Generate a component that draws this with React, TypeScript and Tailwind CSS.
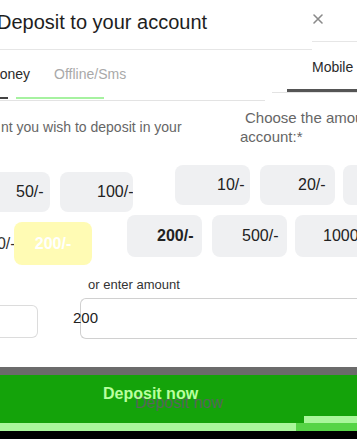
import React from "react";

function Btn({ w, h, text, pl, bold, cls }: { w: string; h: string; text: string; pl: string; bold?: boolean; cls?: string }) {
  return (
    <div className={`flex shrink-0 items-center overflow-hidden whitespace-nowrap rounded-lg bg-[#eff0f2] text-[16px] text-[#222] ${w} ${h} ${pl} ${bold ? "font-bold" : ""} ${cls ?? ""}`}>
      {text}
    </div>
  );
}

export default function App() {
  return (
    <div className="w-[357px] h-[439px] overflow-hidden bg-white flex flex-col" style={{ fontFamily: '"Liberation Sans", Arial, sans-serif' }}>
      {/* Header */}
      <div className="flex items-start shrink-0">
        <div className="w-[312px] h-[50px] border-b border-[#e6e6e6] flex items-start justify-between shrink-0">
          <div className="ml-[-3px] mt-[8px] text-[20px] leading-[28px] text-[#1e1e1e] whitespace-nowrap">Deposit to your account</div>
          <div className="mt-[11px] mr-[-14px] text-[#8a8a8a]">
            <svg width="16" height="16" viewBox="0 0 16 16" fill="none" stroke="currentColor" strokeWidth="1.6" strokeLinecap="round">
              <path d="M4 4 L12 12 M12 4 L4 12" />
            </svg>
          </div>
        </div>
        <div className="flex-1 h-[42px] border-b border-[#e6e6e6]" />
      </div>

      {/* Tabs */}
      <div className="flex items-start shrink-0">
        <div className="w-[265px] h-[51px] border-b border-[#e3e3e3] flex flex-col shrink-0">
          <div className="h-[47px] flex items-center gap-[24px] pt-[2px] text-[14px] whitespace-nowrap">
            <span className="ml-[-12px] text-[#2a2a2a]">money</span>
            <span className="text-[#a9a9a9]">Offline/Sms</span>
          </div>
          <div className="h-[2px] flex">
            <div className="w-[8px] bg-[#444]" />
            <div className="ml-[8px] w-[88px] bg-[#a6f2a0]" />
          </div>
        </div>
        <div className="ml-[7px] mt-[-8px] flex-1 h-[51px] border-b border-[#e3e3e3] flex flex-col">
          <div className="h-[47px] flex items-center pl-[40px] pt-[4px] text-[14px] text-[#2a2a2a] whitespace-nowrap">Mobile</div>
          <div className="h-[3px] ml-[15px] bg-[#555]" />
        </div>
      </div>

      {/* Description */}
      <div className="flex items-start shrink-0 h-[64px] text-[#666] whitespace-nowrap">
        <div className="w-[240px] pt-[16px] shrink-0 overflow-hidden text-[14px]">
          <span className="ml-[1px]">nt you wish to deposit in your</span>
        </div>
        <div className="flex flex-col leading-[19px] pt-[7px] text-[15px]">
          <span className="ml-[5px]">Choose the amount</span>
          <span>account:*</span>
        </div>
      </div>

      {/* Amount row 1 */}
      <div className="flex items-start shrink-0 h-[50px]">
        <Btn w="w-[50px]" h="h-[40px]" text="50/-" pl="pl-[16px]" cls="mt-[7px] rounded-l-none" />
        <Btn w="w-[73px]" h="h-[40px]" text="100/-" pl="pl-[37px]" cls="mt-[7px] ml-[10px]" />
        <Btn w="w-[75px]" h="h-[40px]" text="10/-" pl="pl-[42px]" cls="ml-[42px]" />
        <Btn w="w-[75px]" h="h-[40px]" text="20/-" pl="pl-[38px]" cls="ml-[10px]" />
        <Btn w="w-[75px]" h="h-[40px]" text="" pl="" cls="ml-[8px]" />
      </div>

      {/* Amount row 2 */}
      <div className="flex items-start shrink-0 h-[58px]">
        <div className="w-[14px] h-[43px] mt-[7px] flex items-center text-[16px] text-[#333] shrink-0 overflow-hidden whitespace-nowrap">
          <span className="ml-[-12px]">00/-</span>
        </div>
        <div className="w-[78px] h-[43px] mt-[7px] rounded-lg bg-[#fffbb4] flex items-center justify-center text-[16px] font-bold text-white shrink-0">200/-</div>
        <Btn w="w-[75px]" h="h-[42px]" text="200/-" pl="pl-[30px]" bold cls="ml-[35px]" />
        <Btn w="w-[75px]" h="h-[42px]" text="500/-" pl="pl-[30px]" cls="ml-[10px]" />
        <Btn w="w-[75px]" h="h-[42px]" text="1000/-" pl="pl-[28px]" cls="ml-[8px]" />
      </div>

      {/* Label */}
      <div className="shrink-0 h-[25px] pl-[88px] pt-[4px] text-[13px] leading-[16px] text-[#333] whitespace-nowrap">or enter amount</div>

      {/* Inputs */}
      <div className="flex items-start shrink-0 h-[69px]">
        <div className="w-[38px] h-[33px] mt-[7px] border border-l-0 border-[#dcdcdc] rounded-r-md shrink-0" />
        <div className="ml-[42px] flex-1 h-[41px] border border-r-0 border-[#d0d0d0] rounded-l-md flex items-center">
          <span className="ml-[-8px] text-[15px] text-[#222]">200</span>
        </div>
      </div>

      {/* Bottom bar */}
      <div className="shrink-0 h-[8px] bg-[#6b6b6b]" />
      <div className="shrink-0 h-[41px] bg-[#14a30a] flex">
        <div className="relative w-full">
          <span className="absolute left-[135px] top-[19px] text-[16px] leading-[18px] text-[#57675a] whitespace-nowrap">Deposit now</span>
          <span className="absolute left-[103px] top-[10px] text-[16px] leading-[18px] font-bold text-[#b9ff9f] whitespace-nowrap">Deposit now</span>
        </div>
      </div>
      <div className="shrink-0 h-[7px] flex">
        <div className="w-[304px] bg-[#14a30a]" />
        <div className="flex-1 bg-[#a9f79b]" />
      </div>
      <div className="shrink-0 h-[8px] flex">
        <div className="w-[296px] bg-[#a9f79b]" />
        <div className="flex-1 bg-[#56d446]" />
      </div>
      <div className="flex-1 bg-black" />
    </div>
  );
}
